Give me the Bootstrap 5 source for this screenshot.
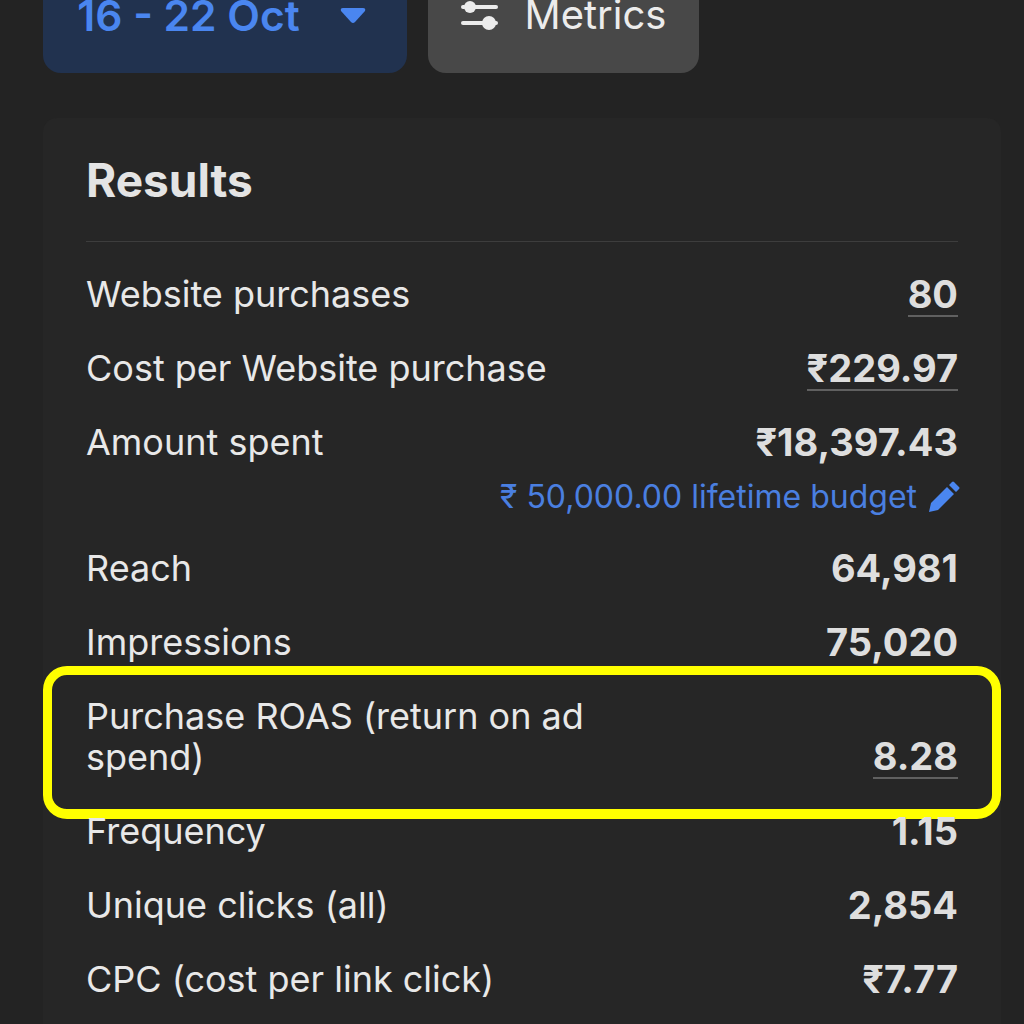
<!DOCTYPE html>
<html lang="en">
  <head>
    <meta charset="UTF-8" />
    <title>Results</title>
    <link rel="stylesheet" href="https://cdn.jsdelivr.net/npm/bootstrap@5.3.0/dist/css/bootstrap.min.css" />
    <style>
      html, body { height: 100%; overflow: hidden; }
      body { background: #232323; font-family: Inter, "Noto Sans", "DejaVu Sans", sans-serif; color: #e6e6e6; }
      .page-wrap { margin-top: -32px; padding: 0 23px 0 43px; }
      .top-btn { height: 105px; border-radius: 18px; border: 0; line-height: 1; padding: 27px 0 0; display: flex; justify-content: center; align-items: flex-start; }
      .btn-date { width: 364px; background: #21324f; color: #4a86f0; font-size: 42.5px; font-weight: 600; gap: 40px; padding-right: 7px; }
      .btn-date svg { margin-top: 12px; }
      .btn-metrics { width: 271px; background: #484848; color: #ececec; font-size: 40px; gap: 26px; margin-left: 21px; }
      .results-card { margin-top: 45px; background: #262626; border-radius: 14px; padding: 36px 43px 0; height: 1000px; }
      .results-title { font-size: 46px; font-weight: 700; line-height: 52px; color: #e4e4e4; margin: 0; padding-bottom: 35px; border-bottom: 1px solid #3d3d3d; }
      .stat-list { padding-top: 32px; }
      .stat-row { font-size: 36px; line-height: 41px; padding-bottom: 33px; color: #e8e8e8; position: relative; }
      .stat-name { max-width: 560px; }
      .stat-val { font-weight: 700; color: #dedede; font-size: 38px; align-self: flex-end; }
      .dotted { border-bottom: 2px solid #606060; padding-bottom: 0; margin-bottom: -2px; }
      .roas-val { margin-bottom: -1px; }
      .budget-line { font-size: 32px; line-height: 37px; color: #4a7fe0; text-align: right; margin-top: -18px; padding-bottom: 33px; display: flex; justify-content: flex-end; align-items: center; gap: 11px; }
      .budget-line svg { margin-right: -2px; }
      .roas-mark { position: absolute; left: -43px; right: -43px; top: -30px; bottom: -8px; border: 9px solid #ffff00; border-bottom-width: 10px; border-radius: 24px; pointer-events: none; }
    </style>
  </head>
  <body>
    <div class="page-wrap">
      <!-- top buttons -->
      <div class="d-flex">
        <button class="top-btn btn-date">
          <span>16 - 22 Oct</span>
          <svg width="26" height="17" viewBox="0 0 26 17"><path d="M3 1h20q3 0 2 3L15 15q-2 2-4 0L1 4Q0 1 3 1z" fill="#4a86f0" /></svg>
        </button>
        <button class="top-btn btn-metrics">
          <svg width="38" height="36" viewBox="0 0 38 36" class="mt-1">
            <g fill="#ececec">
              <rect x="0" y="6" width="5" height="4" rx="2" />
              <rect x="12" y="6" width="25" height="4" rx="2" />
              <circle cx="9" cy="8" r="6" />
              <rect x="0" y="22" width="25" height="4" rx="2" />
              <rect x="32" y="22" width="5" height="4" rx="2" />
              <circle cx="28" cy="24" r="7" />
            </g>
          </svg>
          <span>Metrics</span>
        </button>
      </div>

      <!-- results card -->
      <div class="results-card">
        <h2 class="results-title">Results</h2>
        <div class="stat-list">
          <div class="stat-row d-flex justify-content-between">
            <div class="stat-name">Website purchases</div>
            <div class="stat-val dotted">80</div>
          </div>
          <div class="stat-row d-flex justify-content-between">
            <div class="stat-name">Cost per Website purchase</div>
            <div class="stat-val dotted">₹229.97</div>
          </div>
          <div class="stat-row d-flex justify-content-between">
            <div class="stat-name">Amount spent</div>
            <div class="stat-val">₹18,397.43</div>
          </div>
          <div class="budget-line">
            <span>₹ 50,000.00 lifetime budget</span>
            <svg width="32" height="32" viewBox="0 0 32 32"><path d="M1 31l2-9L19 6l7 7L10 29zM21 4l3-3q1-1 2 0l5 5q1 1 0 2l-3 3z" fill="#4a86f0" /></svg>
          </div>
          <div class="stat-row d-flex justify-content-between">
            <div class="stat-name">Reach</div>
            <div class="stat-val">64,981</div>
          </div>
          <div class="stat-row d-flex justify-content-between">
            <div class="stat-name">Impressions</div>
            <div class="stat-val">75,020</div>
          </div>
          <div class="stat-row d-flex justify-content-between">
            <div class="stat-name">Purchase ROAS (return on ad spend)</div>
            <div class="stat-val dotted roas-val">8.28</div>
            <div class="roas-mark"></div>
          </div>
          <div class="stat-row d-flex justify-content-between">
            <div class="stat-name">Frequency</div>
            <div class="stat-val">1.15</div>
          </div>
          <div class="stat-row d-flex justify-content-between">
            <div class="stat-name">Unique clicks (all)</div>
            <div class="stat-val">2,854</div>
          </div>
          <div class="stat-row d-flex justify-content-between">
            <div class="stat-name">CPC (cost per link click)</div>
            <div class="stat-val">₹7.77</div>
          </div>
        </div>
      </div>
    </div>
    <script src="https://cdn.jsdelivr.net/npm/bootstrap@5.3.0/dist/js/bootstrap.bundle.min.js"></script>
  </body>
</html>
